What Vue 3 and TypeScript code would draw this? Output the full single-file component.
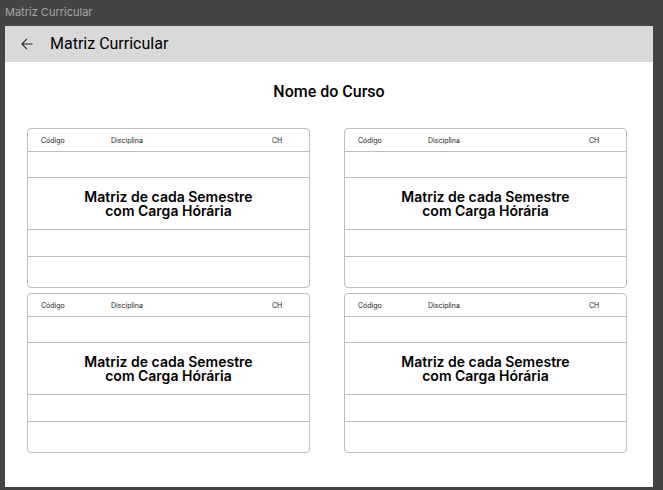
<script setup lang="ts">
interface Semester {
  id: number
  lines: string[]
}

const columns: string[] = ['Código', 'Disciplina', 'CH']
const semesters: Semester[] = [1, 2, 3, 4].map((id) => ({
  id,
  lines: ['Matriz de cada Semestre', 'com Carga Hórária'],
}))
</script>

<template>
  <div class="canvas">
    <div class="frame-label">Matriz Curricular</div>
    <div class="frame">
      <header class="bar">
        <button class="back" type="button" aria-label="Voltar">
          <svg viewBox="0 0 12 12" width="12" height="12" fill="none" stroke="#222" stroke-width="1.1">
            <path d="M11.5 6H1M6 0.8L0.9 6L6 11.2" />
          </svg>
        </button>
        <h1 class="title">Matriz Curricular</h1>
      </header>
      <main class="content">
        <h2 class="course">Nome do Curso</h2>
        <div class="grid">
          <div v-for="semester in semesters" :key="semester.id" class="card">
            <table class="matrix">
              <colgroup>
                <col class="col-code" />
                <col />
                <col class="col-hours" />
              </colgroup>
              <thead>
                <tr class="head">
                  <th v-for="column in columns" :key="column" scope="col">{{ column }}</th>
                </tr>
              </thead>
              <tbody>
                <tr class="first"><td colspan="3"></td></tr>
                <tr class="message">
                  <td colspan="3">
                    <div v-for="line in semester.lines" :key="line">{{ line }}</div>
                  </td>
                </tr>
                <tr class="fourth"><td colspan="3"></td></tr>
                <tr class="last"><td colspan="3"></td></tr>
              </tbody>
            </table>
          </div>
        </div>
      </main>
    </div>
  </div>
</template>

<style>
body {
  background: #444;
}
</style>

<style scoped>
.canvas {
  box-sizing: border-box;
  display: flex;
  flex-direction: column;
  min-height: 100vh;
  padding: 0 10px 3px 5px;
  background: #444;
  color: #000;
  font-family: Inter, "Liberation Sans", sans-serif;
}

.frame-label {
  height: 26px;
  color: #a6a6a6;
  font-size: 11px;
  line-height: 24px;
}

.frame {
  flex: 1;
  background: #fff;
}

.bar {
  display: flex;
  align-items: center;
  gap: 17px;
  height: 36px;
  padding: 0 16px;
  background: #d9d9d9;
}

.back {
  display: flex;
  padding: 0;
  border: 0;
  background: none;
  cursor: pointer;
}

.title,
.course {
  margin: 0;
  font-family: Roboto, "Liberation Sans", sans-serif;
  font-size: 16px;
  line-height: 20px;
}

.title {
  font-weight: 400;
}

.course {
  font-weight: 500;
  text-align: center;
}

.content {
  padding: 20px 0;
}

.grid {
  display: grid;
  grid-template-columns: 1fr 1fr;
  gap: 5px 34px;
  margin-top: 26px;
  padding: 0 26px 0 22px;
}

.card {
  border: 1px solid #bdbdbd;
  border-radius: 4px;
}

.matrix {
  width: 100%;
  border-spacing: 0;
  table-layout: fixed;
}

.col-code {
  width: 70px;
}

.col-hours {
  width: 50px;
}

th,
td {
  box-sizing: border-box;
  padding: 0;
  border-bottom: 1px solid #bdbdbd;
}

th {
  padding: 2px 0 0 13px;
  color: #222;
  font-size: 7px;
  font-weight: 400;
  line-height: 8px;
  text-align: left;
}

.head {
  height: 23px;
}

.first {
  height: 26px;
}

.message {
  height: 52px;
}

.message td {
  font-size: 14px;
  font-weight: 600;
  line-height: 14px;
  text-align: center;
}

.fourth {
  height: 27px;
}

.last {
  height: 30px;
}

.last td {
  border-bottom: 0;
}
</style>
